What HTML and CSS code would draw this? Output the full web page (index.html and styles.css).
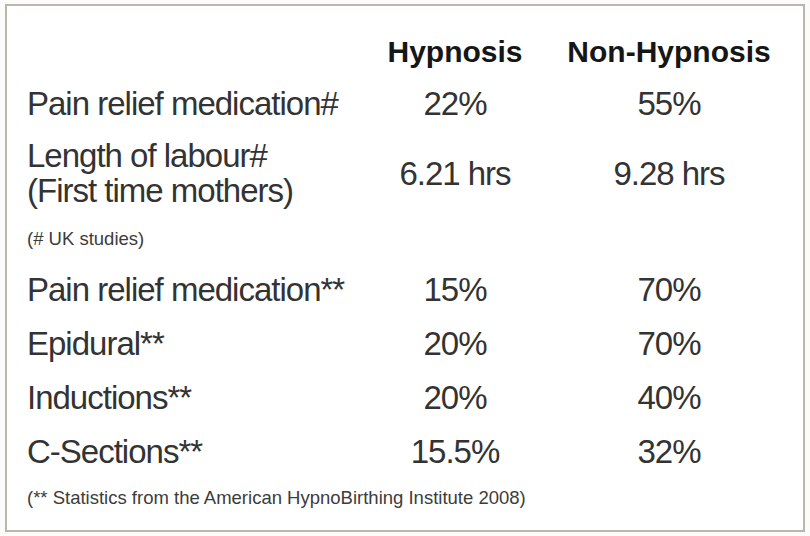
FILE: index.html
```html
<!DOCTYPE html>
<html>
<head>
<meta charset="utf-8">
<link rel="stylesheet" href="styles.css">
</head>
<body>
<div class="frame">
  <div class="table">
    <div class="cell"></div>
    <div class="cell head">Hypnosis</div>
    <div class="cell head">Non-Hypnosis</div>

    <div class="cell label r1">Pain relief medication#</div>
    <div class="cell num r1">22%</div>
    <div class="cell num r1">55%</div>

    <div class="cell label r2">Length of labour#<br>(First time mothers)</div>
    <div class="cell num r2">6.21 hrs</div>
    <div class="cell num r2">9.28 hrs</div>

    <div class="note uk">(# UK studies)</div>

    <div class="cell label row">Pain relief medication**</div>
    <div class="cell num row">15%</div>
    <div class="cell num row">70%</div>

    <div class="cell label row">Epidural**</div>
    <div class="cell num row">20%</div>
    <div class="cell num row">70%</div>

    <div class="cell label row">Inductions**</div>
    <div class="cell num row">20%</div>
    <div class="cell num row">40%</div>

    <div class="cell label row">C-Sections**</div>
    <div class="cell num row">15.5%</div>
    <div class="cell num row">32%</div>

    <div class="note stats">(** Statistics from the American HypnoBirthing Institute 2008)</div>
  </div>
</div>
</body>
</html>
```
FILE: styles.css
```css
html, body {
  margin: 0;
  padding: 0;
  background: #fbfbfa;
}
body {
  padding: 4px 5px;
  width: 800px;
  height: 528px;
}
.frame {
  box-sizing: border-box;
  width: 800px;
  height: 528px;
  border: 2px solid #bab6ae;
  background: #ffffff;
  padding: 20px 0 0 20px;
  font-family: "Liberation Sans", Arial, sans-serif;
  color: #333333;
}
.table {
  display: grid;
  grid-template-columns: 361px 134px 294px;
}
.cell {
  display: flex;
  flex-direction: column;
  justify-content: center;
  font-size: 33px;
  letter-spacing: -1px;
  line-height: 35px;
  white-space: nowrap;
}
.head {
  align-items: center;
  font-size: 30px;
  letter-spacing: 0;
  font-weight: bold;
  color: #161616;
  height: 50px;
}
.num {
  align-items: center;
}
.r1 { height: 54px; }
.r2 { height: 86px; }
.row { height: 54px; }
.note {
  grid-column: 1 / -1;
  font-size: 18.5px;
  color: #3c3c3c;
  white-space: nowrap;
}
.uk { height: 46px; line-height: 46px; }
.stats { height: 40px; line-height: 40px; }
```
